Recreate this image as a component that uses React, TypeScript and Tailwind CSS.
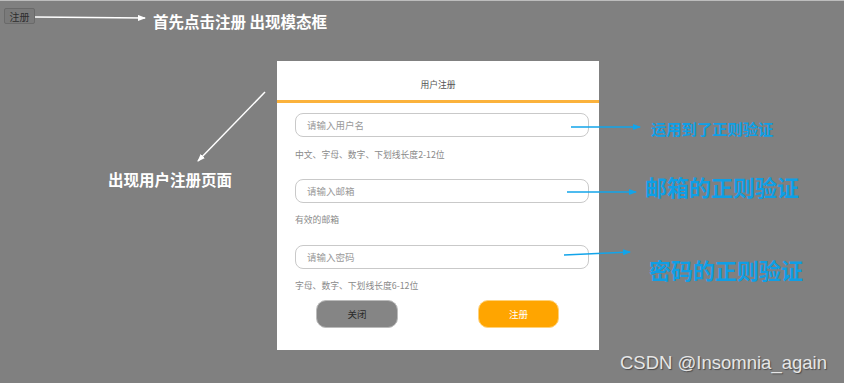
import React from "react";

const cjk = { fontFamily: '"Noto Sans CJK SC", "Noto Sans", sans-serif' };

function Field({ placeholder, hint, hintClass }: { placeholder: string; hint: string; hintClass: string }) {
  return (
    <>
      <div className="ml-[18px] flex h-[24px] w-[294px] items-center rounded-[8px] border border-[#c9c9c9] bg-white pl-[11px] text-[9.5px] text-[#9a9a9a]">
        {placeholder}
      </div>
      <div className={`ml-[18px] h-[12px] text-[8.8px] leading-[12px] text-[#8a8a8a] ${hintClass}`}>{hint}</div>
    </>
  );
}

export default function App() {
  return (
    <div className="relative h-[383px] w-[844px] overflow-hidden border-t border-[#bdbdbd] bg-[#808080]" style={cjk}>
      {/* top: trigger button */}
      <div className="flex items-start pl-[4px] pt-[7px]">
        <div className="flex h-[16px] w-[31px] items-center justify-center rounded-[2px] border border-[#6a6a6a] bg-[#7a7a7a] text-[10px] text-[#2e2e2e]">
          注册
        </div>
        <div className="ml-[118px] mt-[3px] text-[15.5px] font-bold leading-[20px] text-white">首先点击注册 出现模态框</div>
      </div>

      {/* modal */}
      <div className="ml-[277px] mt-[30px] h-[289px] w-[322px] bg-white">
        <div className="flex h-[42px] items-end justify-center border-b-[3px] border-[#fbb23c] pb-[9px] text-[8.8px] leading-[12px] text-[#555]">
          用户注册
        </div>
        <div className="h-[10px]" />
        <Field placeholder="请输入用户名" hint="中文、字母、数字、下划线长度2-12位" hintClass="mt-[12px] mb-[18px]" />
        <Field placeholder="请输入邮箱" hint="有效的邮箱" hintClass="mt-[11px] mb-[19px]" />
        <Field placeholder="请输入密码" hint="字母、数字、下划线长度6-12位" hintClass="mt-[11px] mb-[8px]" />
        <div className="flex gap-[80px] pl-[39px]">
          <div className="flex h-[28px] w-[82px] items-center justify-center rounded-[10px] border border-[#bbb] bg-[#858585] text-[9.5px] text-[#2a2a2a]">
            关闭
          </div>
          <div className="flex h-[28px] w-[81px] items-center justify-center rounded-[10px] border border-[#ffd27a] bg-[#ffa500] text-[9.5px] text-white">
            注册
          </div>
        </div>
      </div>

      {/* annotations */}
      <div className="absolute left-[108px] top-[168px] text-[15.5px] font-bold leading-[20px] text-white">出现用户注册页面</div>
      <div className="absolute left-[651px] top-[117px] text-[15.3px] font-bold leading-[20px] text-[#0e9fe6]">运用到了正则验证</div>
      <div className="absolute left-[645px] top-[171px] text-[22px] font-bold leading-[28px] text-[#0e9fe6]">邮箱的正则验证</div>
      <div className="absolute left-[649px] top-[254px] text-[22px] font-bold leading-[28px] text-[#0e9fe6]">密码的正则验证</div>

      <svg className="pointer-events-none absolute left-0 top-0" width="844" height="383">
        <defs>
          <marker id="w" markerWidth="8" markerHeight="6" refX="7" refY="3" orient="auto" markerUnits="userSpaceOnUse">
            <path d="M0,0 L8,3 L0,6 Z" fill="#fff" />
          </marker>
          <marker id="b" markerWidth="8" markerHeight="6" refX="7" refY="3" orient="auto" markerUnits="userSpaceOnUse">
            <path d="M0,0 L8,3 L0,6 Z" fill="#12a4ea" />
          </marker>
        </defs>
        <line x1="35" y1="16" x2="145" y2="17" stroke="#fff" strokeWidth="1.5" markerEnd="url(#w)" />
        <line x1="265" y1="91" x2="198" y2="160" stroke="#fff" strokeWidth="1.5" markerEnd="url(#w)" />
        <line x1="571" y1="126" x2="640" y2="126" stroke="#12a4ea" strokeWidth="1.5" markerEnd="url(#b)" />
        <line x1="567" y1="191" x2="636" y2="191" stroke="#12a4ea" strokeWidth="1.5" markerEnd="url(#b)" />
        <line x1="564" y1="254" x2="630" y2="251" stroke="#12a4ea" strokeWidth="1.5" markerEnd="url(#b)" />
      </svg>

      <div
        className="absolute left-[620px] top-[351px] text-[18.5px] leading-[22px] text-[#e6e6e6] [text-shadow:1px_1px_1px_#4a4a4a]"
        style={{ fontFamily: '"Liberation Sans", Arial, sans-serif' }}
      >
        CSDN @Insomnia_again
      </div>
    </div>
  );
}
